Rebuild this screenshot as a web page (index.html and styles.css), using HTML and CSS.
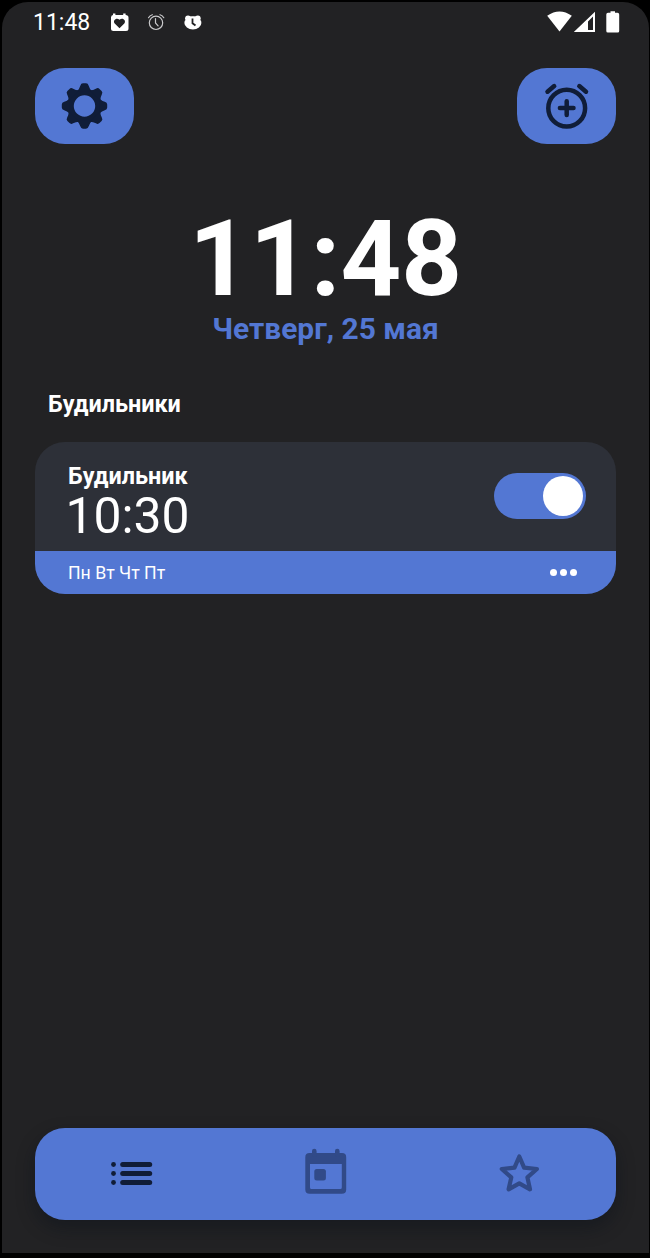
FILE: index.html
```html
<!DOCTYPE html>
<html lang="ru">
<head>
<meta charset="utf-8">
<title>Будильники</title>
<link rel="stylesheet" href="styles.css">
</head>
<body>
<div class="screen">
  <header class="status">
    <span class="status-time">11:48</span>
    <svg class="status-notes" width="94" height="20" viewBox="110 12 94 20">
      <path fill="#fff" fill-rule="evenodd" d="M113 15V13.6h2.4V15h7.8V13.6h2.4V15q2.900 0 2.900 2.600V28.500q0 2.500-2.500 2.500H113.500Q111 31 111 28.500V17.600Q111 15 113 15ZM119.500 28.300L124.300 23.500C126.600 20.500 122.500 16.800 119.500 19.800C116.500 16.800 112.400 20.500 114.700 23.500Z"/>
      <g fill="none" stroke="#c9c9cb" stroke-width="1.200" stroke-linecap="round">
        <circle cx="156" cy="22.800" r="6.700"/>
        <path d="M155.500 18.500V23l2.600 2.800M148.500 17.700q1.300-2.200 3.800-3M163.800 17.700q-1.300-2.200-3.800-3"/>
      </g>
      <g fill="#fff">
        <circle cx="188" cy="18.300" r="2.900"/><circle cx="197.800" cy="18.300" r="2.900"/>
        <rect x="187" y="16.400" width="12" height="6"/>
        <ellipse cx="192.900" cy="23" rx="8.500" ry="6.500"/>
      </g>
      <path d="M192.500 18.500v4.700l3 2.300" fill="none" stroke="#222224" stroke-width="1.800"/>
    </svg>
    <svg class="status-system" width="76" height="24" viewBox="546 10 76 24">
      <path fill="#fff" d="M547.200 15.800Q559.500 7 571.800 15.800L559.500 31.500Z"/>
      <path fill="#fff" fill-rule="evenodd" d="M595 11.800V32H573.800ZM593 16.500L588 21.500V30H593Z"/>
      <path fill="#fff" d="M610.500 11.300h4.500v1.500h2.500q1.700 0 1.700 1.700V31q0 1.500-1.500 1.500H607.800q-1.500 0-1.500-1.500V14.500q0-1.700 1.700-1.700h2.500Z"/>
    </svg>
  </header>

  <div class="toolbar">
    <button class="tool" aria-label="Настройки">
      <svg width="50" height="50" viewBox="-24.500 -25 50 50">
        <defs><path id="tooth" d="M-7.500 -14.800Q-4.900 -17.500 -4.200 -20.300Q-3.500 -22.700 -1.500 -22.700H1.500Q3.500 -22.700 4.200 -20.300Q4.900 -17.500 7.500 -14.800Z"/></defs>
        <g fill="#101d38">
          <path fill-rule="evenodd" d="M-16.900 0a16.900 16.900 0 1 0 33.800 0a16.900 16.900 0 1 0 -33.800 0ZM-10.700 0a10.700 10.700 0 1 0 21.400 0a10.700 10.700 0 1 0 -21.400 0Z"/>
          <use href="#tooth"/><use href="#tooth" transform="rotate(45)"/><use href="#tooth" transform="rotate(90)"/><use href="#tooth" transform="rotate(135)"/><use href="#tooth" transform="rotate(180)"/><use href="#tooth" transform="rotate(225)"/><use href="#tooth" transform="rotate(270)"/><use href="#tooth" transform="rotate(315)"/>
        </g>
      </svg>
    </button>
    <button class="tool" aria-label="Добавить будильник">
      <svg width="50" height="50" viewBox="542 81 50 50" fill="none" stroke="#101d38" stroke-width="4.500" stroke-linecap="round">
        <circle cx="566.700" cy="108.200" r="18.400"/>
        <path d="M566.700 101.300v13.600M559.900 108.100h13.600M547.500 91.700l6.700-5.600M586 91.700l-6.700-5.600"/>
      </svg>
    </button>
  </div>

  <section class="clock">
    <div class="clock-time">11:48</div>
    <div class="clock-date">Четверг, 25 мая</div>
  </section>

  <h2 class="heading">Будильники</h2>

  <article class="alarm">
    <div class="alarm-main">
      <div class="alarm-info">
        <div class="alarm-name">Будильник</div>
        <div class="alarm-time">10:30</div>
      </div>
      <div class="switch"><div class="knob"></div></div>
    </div>
    <div class="alarm-foot">
      <span class="days">Пн Вт Чт Пт</span>
      <div class="more"><i></i><i></i><i></i></div>
    </div>
  </article>

  <nav class="nav">
    <div class="nav-item">
      <svg width="44" height="26" viewBox="110 1161 44 26" fill="#101d38">
        <circle cx="113.500" cy="1164.500" r="2.400"/><circle cx="113.500" cy="1173.500" r="2.400"/><circle cx="113.500" cy="1182.500" r="2.400"/>
        <rect x="120.200" y="1162" width="32" height="5" rx="2.500"/><rect x="120.200" y="1171" width="32" height="5" rx="2.500"/><rect x="120.200" y="1180" width="32" height="5" rx="2.500"/>
      </svg>
    </div>
    <div class="nav-item">
      <svg width="42" height="52" viewBox="305 1148 42 52" fill="#314a88">
        <path fill-rule="evenodd" d="M309.500 1153H342q4.200 0 4.200 4.200V1189.500q0 4.300-4.300 4.300H309.600q-4.300 0-4.300-4.300V1157.200q0-4.200 4.200-4.200ZM310 1164V1187.500q0 1.500 1.500 1.500H340.300q1.500 0 1.500-1.500V1164Z"/>
        <rect x="312" y="1148.800" width="4.600" height="8" rx="2.300"/><rect x="335" y="1148.800" width="4.600" height="8" rx="2.300"/>
        <rect x="314.300" y="1169" width="11.600" height="11.500" rx="2.500"/>
      </svg>
    </div>
    <div class="nav-item">
      <svg width="42" height="42" viewBox="498 1153 42 42">
        <path fill="none" stroke="#314a88" stroke-width="4.200" stroke-linejoin="round" d="M519.300 1156.500L524.100 1167.700L536.900 1169L527.400 1177.400L530 1189.300L519.300 1183.300L508.600 1189.300L511.300 1177.400L501.800 1169L514.500 1167.700Z"/>
      </svg>
    </div>
  </nav>
</div>
</body>
</html>
```

FILE: styles.css
```css
* { box-sizing: border-box; }

body {
  margin: 0;
  background: #000;
  color: #fff;
  font-family: Roboto, "Liberation Sans", sans-serif;
}

.screen {
  display: flex;
  flex-direction: column;
  width: 647px;
  height: 1251px;
  margin: 2px 1px 5px 2px;
  padding: 0 33px 33px;
  background: #222224;
  border-radius: 26px 26px 0 0;
  overflow: hidden;
}

.status {
  display: flex;
  align-items: center;
  height: 40px;
  margin: 0 -6px 0 -2px;
}

.status-time { font-size: 23px; line-height: 40px; padding-top: 2px; width: 77px; }
.status-system { margin-left: auto; }

.toolbar {
  display: flex;
  justify-content: space-between;
  margin-top: 26px;
}

.tool {
  display: flex;
  align-items: center;
  justify-content: center;
  width: 99px;
  height: 76px;
  padding: 0;
  border: 0;
  border-radius: 30px;
  background: #5377d3;
}

.clock {
  margin-top: 63px;
  text-align: center;
  font-weight: 700;
}

.clock-time { font-size: 106px; line-height: 104px; }
.clock-date { font-size: 29.9px; line-height: 36px; color: #5377d3; }

.heading {
  margin: 42px 0 0 13px;
  font-size: 23.4px;
  line-height: 30px;
  font-weight: 700;
}

.alarm {
  margin-top: 23px;
  border-radius: 30px;
  overflow: hidden;
  background: #2d3038;
}

.alarm-main {
  display: flex;
  align-items: flex-start;
  justify-content: space-between;
  height: 109px;
  padding: 0 30px 0 33px;
}

.alarm-info { padding-top: 20px; }
.alarm-name { font-size: 23.4px; line-height: 28px; font-weight: 700; }
.alarm-time { font-size: 49.8px; line-height: 52px; margin-left: -2.500px; }

.switch {
  display: flex;
  justify-content: flex-end;
  width: 92px;
  height: 46px;
  margin-top: 31px;
  padding: 3px;
  border-radius: 23px;
  background: #5377d3;
}

.knob { width: 40px; height: 40px; border-radius: 50%; background: #fff; }

.alarm-foot {
  display: flex;
  align-items: center;
  justify-content: space-between;
  height: 43px;
  padding: 0 39px 0 33px;
  background: #5377d3;
}

.days { font-size: 17.7px; line-height: 24px; padding-top: 1px; }

.more { display: flex; gap: 3px; }
.more i { width: 7px; height: 7px; border-radius: 50%; background: #fff; }

.nav {
  display: flex;
  height: 92px;
  margin-top: auto;
  border-radius: 30px;
  background: #5377d3;
  box-shadow: 0 8px 18px rgba(8, 14, 24, .4);
}

.nav-item {
  display: flex;
  flex: 1;
  align-items: center;
  justify-content: center;
}
```
